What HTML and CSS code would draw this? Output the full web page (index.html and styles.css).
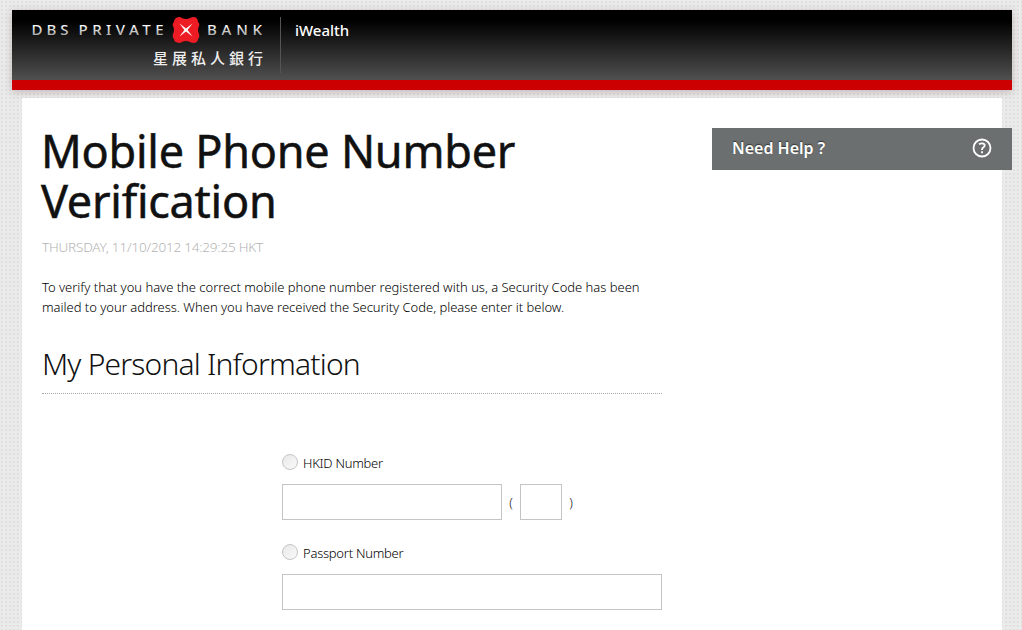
FILE: index.html
```
<!DOCTYPE html>
<html lang="en">
<head>
  <meta charset="UTF-8" />
  <meta name="viewport" content="width=device-width, initial-scale=1.0" />
  <title>Mobile Phone Number Verification</title>
  <link rel="stylesheet" href="styles.css">
</head>
<body>
  <header class="header">
    <svg class="logo" width="232" height="56" viewBox="0 0 232 56">
      <defs>
        <linearGradient id="silver" x1="0" y1="0" x2="0" y2="1">
          <stop offset="0.3" stop-color="#fff" />
          <stop offset="0.8" stop-color="#aaa" />
        </linearGradient>
      </defs>
      <g class="logo-latin" fill="url(#silver)">
        <text x="-0.500" y="18" textLength="37" lengthAdjust="spacing">DBS</text>
        <text x="46.500" y="18" textLength="85" lengthAdjust="spacing">PRIVATE</text>
        <text x="175" y="18" textLength="55" lengthAdjust="spacing">BANK</text>
      </g>
      <path fill="#ed1c24" d="M145 0.500Q148 -0.500 150 1Q154 3 158 1Q161 -0.500 164 0.500Q166 2 166 5Q168 7 167 9Q165 13 167 17Q168 20 166 22Q166 24 164 25.500Q161 26.500 158 25Q154 23 150 25Q148 26.500 145 25.500Q142 24.500 142 22Q140 20 141 17Q143 13 141 9Q140 7 142 5Q142 2 145 0.500Z" />
      <path fill="#fff" d="M147.500 6.500L154 11.600L160.500 6.500L155.600 13L160.500 19.500L154 14.600L147.500 19.500L152.400 13Z" />
      <text class="logo-chinese" x="121" y="47" textLength="110" lengthAdjust="spacing">星展私人銀行</text>
    </svg>
    <span class="product">iWealth</span>
  </header>

  <div class="container">
    <main class="content">
      <h1>Mobile Phone Number Verification</h1>
      <p class="date">THURSDAY, 11/10/2012 14:29:25 HKT</p>
      <p class="intro">To verify that you have the correct mobile phone number registered with us, a Security Code has been<br>mailed to your address. When you have received the Security Code, please enter it below.</p>
      <h2>My Personal Information</h2>

      <form class="form">
        <label class="option"><input type="radio" name="idType"><span>HKID Number</span></label>
        <div class="fields">
          <input type="text" class="number">
          <span class="bracket">(</span>
          <input type="text" class="digit">
          <span class="bracket">)</span>
        </div>
        <label class="option"><input type="radio" name="idType"><span>Passport Number</span></label>
        <div class="fields">
          <input type="text" class="passport">
        </div>
      </form>
    </main>

    <aside class="help">
      <span>Need Help ?</span>
      <svg width="20" height="20" viewBox="0 0 20 20" fill="none" stroke="#fff" stroke-width="1.800">
        <circle cx="10" cy="10" r="8.500" />
        <path d="M7 6.300Q8.500 5.200 10.300 5.300Q12.800 5.500 12.700 7.500Q12.600 8.700 11.200 9.600Q10 10.400 10 12M10 13.300V15.300" />
      </svg>
    </aside>
  </div>
</body>
</html>
```
FILE: styles.css
```
* {
  box-sizing: border-box;
}
body {
  margin: 0;
  padding: 10px 10px 0 12px;
  height: 630px;
  overflow: hidden;
  font-family: "Noto Sans", "Open Sans", sans-serif;
  color: #111;
  background-color: #eaeaea;
  background-image: radial-gradient(#e0e0e0 0.8px, transparent 1px), radial-gradient(#f2f2f2 0.8px, transparent 1px);
  background-size: 4px 4px, 5px 3px;
  background-position: 0 0, 2px 2px;
}
.header {
  display: flex;
  height: 80px;
  padding: 7px 20px 0;
  background: linear-gradient(#000 15%, #505050);
  background-clip: padding-box;
  border-bottom: 10px solid #c00;
  box-shadow: 0 2px 8px rgba(90, 40, 40, 0.25);
}
.logo {
  flex: none;
}
.logo-latin {
  font-size: 15px;
  font-weight: 500;
}
.logo-chinese {
  font-family: "Noto Sans CJK TC", sans-serif;
  font-size: 15px;
  font-weight: 500;
  fill: #eee;
}
.product {
  margin-left: 16px;
  padding-left: 14px;
  height: 56px;
  border-left: 1px solid #555;
  color: #fff;
  font-size: 15px;
  font-weight: 500;
  line-height: 26px;
}
.container {
  display: flex;
  width: 980px;
  height: 540px;
  margin: 8px 0 0 10px;
  padding-left: 20px;
  background: #fff;
}
.content {
  flex: none;
  width: 620px;
  padding-top: 28px;
}
h1, h2, p {
  margin: 0;
}
h1 {
  margin-left: -1px;
  font-size: 45px;
  font-weight: 400;
  line-height: 50px;
  letter-spacing: -0.25px;
  -webkit-text-stroke: 0.5px #111;
}
.date {
  margin-top: 11px;
  color: #b4b4b4;
  font-size: 13.5px;
  font-weight: 300;
  line-height: 20px;
  letter-spacing: -0.2px;
}
.intro {
  margin-top: 20px;
  color: #000;
  font-size: 13px;
  font-weight: 350;
  line-height: 20px;
  letter-spacing: -0.02px;
  white-space: nowrap;
}
h2 {
  height: 51px;
  margin-top: 26px;
  border-bottom: 1px dotted #aaa;
  font-size: 30px;
  font-weight: 300;
  line-height: 42px;
  letter-spacing: -0.8px;
}
.form {
  padding: 59px 0 0 240px;
}
.option {
  display: flex;
  align-items: center;
  gap: 5px;
  height: 20px;
  color: #000;
  font-size: 13px;
  font-weight: 350;
  letter-spacing: -0.25px;
}
.option input {
  appearance: none;
  width: 16px;
  height: 16px;
  margin: 0 0 2px;
  border: 1px solid #c4c4c4;
  border-radius: 50%;
  background: linear-gradient(135deg, #e8e8e8, #fafafa);
}
.fields {
  display: flex;
  align-items: center;
  height: 36px;
  margin: 11px 0 23px;
}
.fields input {
  height: 36px;
  border: 1px solid #c4c4c4;
  background: #fff;
}
.number {
  width: 220px;
}
.digit {
  width: 42px;
}
.passport {
  width: 380px;
}
.bracket {
  width: 18px;
  text-align: center;
  font-size: 13px;
  font-weight: 350;
}
.help {
  display: flex;
  flex: none;
  justify-content: space-between;
  align-items: center;
  width: 300px;
  height: 42px;
  margin: 30px 0 0 50px;
  padding: 0 20px 3px;
  background: #6c6f70;
  color: #fff;
  font-size: 16px;
  font-weight: 600;
  text-shadow: 0 -1px 1px #333;
}
```
